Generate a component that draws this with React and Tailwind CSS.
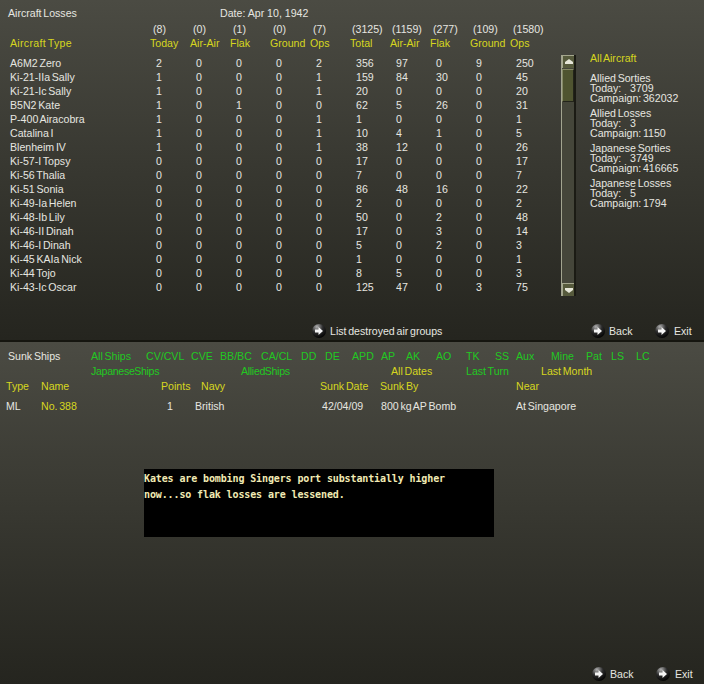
const losses = [
  ["A6M2 Zero", 2,0,0,0,2,356,97,0,9,250],
  ["Ki-21-IIa Sally", 1,0,0,0,1,159,84,30,0,45],
  ["Ki-21-Ic Sally", 1,0,0,0,1,20,0,0,0,20],
  ["B5N2 Kate", 1,0,1,0,0,62,5,26,0,31],
  ["P-400 Airacobra", 1,0,0,0,1,1,0,0,0,1],
  ["Catalina I", 1,0,0,0,1,10,4,1,0,5],
  ["Blenheim IV", 1,0,0,0,1,38,12,0,0,26],
  ["Ki-57-I Topsy", 0,0,0,0,0,17,0,0,0,17],
  ["Ki-56 Thalia", 0,0,0,0,0,7,0,0,0,7],
  ["Ki-51 Sonia", 0,0,0,0,0,86,48,16,0,22],
  ["Ki-49-Ia Helen", 0,0,0,0,0,2,0,0,0,2],
  ["Ki-48-Ib Lily", 0,0,0,0,0,50,0,2,0,48],
  ["Ki-46-II Dinah", 0,0,0,0,0,17,0,3,0,14],
  ["Ki-46-I Dinah", 0,0,0,0,0,5,0,2,0,3],
  ["Ki-45 KAIa Nick", 0,0,0,0,0,1,0,0,0,1],
  ["Ki-44 Tojo", 0,0,0,0,0,8,5,0,0,3],
  ["Ki-43-Ic Oscar", 0,0,0,0,0,125,47,0,3,75],
];
const counts = ["(8)","(0)","(1)","(0)","(7)","(3125)","(1159)","(277)","(109)","(1580)"];
const countOffsets = ["pl-[3px]","pl-[3px]","pl-[3px]","pl-[3px]","pl-[3px]","pl-[2px]","pl-[2px]","pl-[3px]","pl-[3px]","pl-[3px]"];
const heads = ["Today","Air-Air","Flak","Ground","Ops","Total","Air-Air","Flak","Ground","Ops"];
const stats = [
  ["Allied Sorties","Today:   3709","Campaign: 362032"],
  ["Allied Losses","Today:   3","Campaign: 1150"],
  ["Japanese Sorties","Today:   3749","Campaign: 416665"],
  ["Japanese Losses","Today:   5","Campaign: 1794"],
];
const shipTypes = ["All Ships","CV/CVL","CVE","BB/BC","CA/CL","DD","DE","APD","AP","AK","AO","TK","SS","Aux","Mine","Pat","LS","LC"];

function Ball({ id }) {
  return (
    <svg width="14" height="14" viewBox="0 0 14 14" className="shrink-0">
      <defs>
        <radialGradient id={id} cx="0.35" cy="0.2" r="0.85">
          <stop offset="0" stopColor="#b0b0b0" />
          <stop offset="0.5" stopColor="#2a2a2a" />
          <stop offset="1" stopColor="#000" />
        </radialGradient>
      </defs>
      <circle cx="7" cy="7" r="7" fill={`url(#${id})`} />
      <path d="M3 5.5H6.5V3L11 7L6.5 11V8.5H3Z" fill="#f4f4f4" />
    </svg>
  );
}

function Action({ id, label, className = "" }) {
  return (
    <div className={`flex items-center gap-[4px] ${className}`}>
      <Ball id={id} />
      <span>{label}</span>
    </div>
  );
}

function ScrollBtn({ down }) {
  return (
    <div className="h-[13px] bg-[#565a3c] border-t border-l border-[#a5a78e] flex items-center justify-center shrink-0">
      <svg width="8" height="6" viewBox="0 0 8 6">
        <path d={down ? "M0 1H8V3L4 6L0 3Z" : "M0 5H8V3L4 0L0 3Z"} fill="#e6e6d8" />
      </svg>
    </div>
  );
}

export default function App() {
  return (
    <div className="w-[704px] h-[684px] overflow-hidden text-[10.6px] leading-[14px] text-[#e6e6e0] font-['Liberation_Sans',Arial,sans-serif] [word-spacing:-1.2px]">
      <section className="h-[342px] flex flex-col border-b-2 border-[#15150f] bg-gradient-to-b from-[#4b4b43] to-[#25251f]">
        <div className="flex pt-[6px] pl-[8px] h-[23px]">
          <span className="w-[212px]">Aircraft Losses</span>
          <span className="[word-spacing:0]">Date: Apr 10, 1942</span>
        </div>
        <div className="grid grid-cols-[150px_repeat(10,40px)] leading-[13px] h-[13px]">
          <span />
          {counts.map((c, i) => <span key={i} className={countOffsets[i]}>{c}</span>)}
        </div>
        <div className="grid grid-cols-[150px_repeat(10,40px)] h-[20px] text-[#d6d61e]">
          <span className="pl-[10px] tracking-[0.3px]">Aircraft Type</span>
          {heads.map((h, i) => <span key={i}>{h}</span>)}
        </div>
        <div className="flex">
          <div className="w-[556px]">
            {losses.map((r) => (
              <div key={r[0]} className="grid grid-cols-[156px_repeat(10,40px)] h-[14px]">
                <span className="pl-[10px]">{r[0]}</span>
                {r.slice(1).map((v, i) => <span key={i}>{v}</span>)}
              </div>
            ))}
          </div>
          <div className="w-[15px] ml-[5px] -mt-[1px] h-[241px] flex flex-col bg-[#45463a] border-l border-[#a3a590] border-r-2 border-r-[#1b1b14]">
            <ScrollBtn />
            <div className="h-[33px] bg-[#4f5430] border border-[#868a66] border-r-[#23241a] border-b-[#23241a] mt-[1px] mb-auto" />
            <ScrollBtn down />
          </div>
          <div className="pl-[14px] -mt-[5px] leading-[10px]">
            <div className="text-[#d6d61e] h-[15px] leading-[14px] mb-[7px]">All Aircraft</div>
            <div className="flex flex-col gap-[5px]">
              {stats.map((s) => (
                <div key={s[0]}>
                  <div className="h-[10px]">{s[0]}</div>
                  <div className="h-[10px] whitespace-pre [word-spacing:0]">{s[1]}</div>
                  <div className="h-[10px]">{s[2]}</div>
                </div>
              ))}
            </div>
          </div>
        </div>
        <div className="flex mt-auto mb-[1px] h-[16px] pl-[312px]">
          <Action id="b1" label="List destroyed air groups" className="w-[279px]" />
          <Action id="b2" label="Back" className="w-[64px]" />
          <Action id="b3" label="Exit" className="gap-[5px]" />
        </div>
      </section>

      <section className="h-[342px] flex flex-col bg-gradient-to-b from-[#4b4b43] to-[#25251f]">
        <div className="grid grid-cols-[83px_55px_45px_29px_41px_40px_24px_27px_29px_25px_30px_30px_29px_21px_35px_35px_25px_25px_auto] ml-[8px] pt-[7px] h-[22px] text-[#22c822]">
          <span className="text-[#e6e6e0]">Sunk Ships</span>
          {shipTypes.map((s) => <span key={s}>{s}</span>)}
        </div>
        <div className="grid grid-cols-[150px_150px_75px_75px_auto] ml-[91px] h-[15px] text-[#22c822]">
          <span className="[word-spacing:-3px] tracking-[-0.3px]">Japanese Ships</span>
          <span className="[word-spacing:-3px] tracking-[-0.3px]">Allied Ships</span>
          <span className="text-[#d6d61e]">All Dates</span>
          <span>Last Turn</span>
          <span className="text-[#d6d61e]">Last Month</span>
        </div>
        <div className="grid grid-cols-[35px_120px_40px_119px_60px_136px_auto] ml-[6px] h-[20px] text-[#d6d61e]">
          <span>Type</span>
          <span>Name</span>
          <span>Points</span>
          <span>Navy</span>
          <span>Sunk Date</span>
          <span>Sunk By</span>
          <span>Near</span>
        </div>
        <div className="grid grid-cols-[35px_126px_28px_127px_59px_135px_auto] ml-[6px] h-[14px]">
          <span>ML</span>
          <span className="text-[#d6d61e]">No. 388</span>
          <span>1</span>
          <span>British</span>
          <span>42/04/09</span>
          <span>800 kg AP Bomb</span>
          <span>At Singapore</span>
        </div>
        <div className="w-[350px] h-[68px] ml-[144px] mt-[56px] bg-black pt-[2px] text-[#f2ebb4] font-['DejaVu_Sans_Mono',monospace] font-bold text-[10px] leading-[16px] tracking-[-0.12px] [word-spacing:0] whitespace-pre-line">
          {"Kates are bombing Singers port substantially higher\nnow...so flak losses are lessened."}
        </div>
        <div className="flex mt-auto mb-[2px] h-[16px] pl-[592px]">
          <Action id="b4" label="Back" className="w-[64px]" />
          <Action id="b5" label="Exit" className="gap-[5px]" />
        </div>
      </section>
    </div>
  );
}
